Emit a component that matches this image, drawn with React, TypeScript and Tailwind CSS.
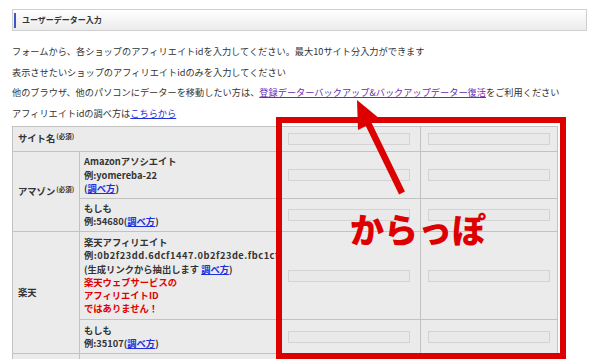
const Req = () => (
  <span className="relative top-[-3px] ml-[1px] text-[6.5px] font-bold">(必須)</span>
);

const Howto = () => (
  <a href="#" className="text-[#1f2fe0] underline">
    調べ方
  </a>
);

const Field = () => (
  <input
    type="text"
    readOnly
    className="mx-auto block h-[12px] w-[122px] border border-[#d3d3d3] bg-[#e9e9e9] outline-none"
  />
);

const InputCells = () => (
  <>
    <td className="border border-[#c2c2c2] align-middle">
      <Field />
    </td>
    <td className="border border-[#c2c2c2] align-middle">
      <Field />
    </td>
  </>
);

export default function App() {
  return (
    <div className="relative h-[359px] w-[600px] overflow-hidden bg-white font-['Noto_Sans_CJK_JP',sans-serif] text-[#333]">
      <div className="w-[587px] pl-[12px] pt-[9px]">
        {/* Section header */}
        <div className="flex h-[22px] items-center border border-[#cfcfcf] bg-gradient-to-b from-white to-[#ebebeb] pl-[1px]">
          <span className="h-[15px] w-[2px] bg-[#3f57c4]" />
          <span className="ml-[6px] text-[8px] font-bold">ユーザーデーター入力</span>
        </div>

        {/* Intro */}
        <div className="mt-[10px] mb-[3px] text-[9.2px] leading-[20.6px]">
          <p>フォームから、各ショップのアフィリエイトidを入力してください。最大10サイト分入力ができます</p>
          <p>表示させたいショップのアフィリエイトidのみを入力してください</p>
          <p>
            他のブラウザ、他のパソコンにデーターを移動したい方は、
            <a href="#" className="text-[#6a2bb0] underline">
              登録データーバックアップ&amp;バックアップデーター復活
            </a>
            をご利用ください
          </p>
          <p>
            アフィリエイトidの調べ方は
            <a href="#" className="text-[#1f2fe0] underline">
              こちらから
            </a>
          </p>
        </div>

        {/* Form table */}
        <table className="w-[545px] table-fixed border-collapse bg-[#ebebeb] text-[9.3px] font-bold leading-[13.3px]">
          <colgroup>
            <col className="w-[67px]" />
            <col className="w-[197px]" />
            <col className="w-[144px]" />
            <col className="w-[137px]" />
          </colgroup>
          <tbody>
            <tr className="h-[25px]">
              <td colSpan={2} className="border border-[#c2c2c2] pl-[5px] align-middle">
                サイト名
                <Req />
              </td>
              <InputCells />
            </tr>
            <tr className="h-[47px]">
              <td rowSpan={2} className="border border-[#c2c2c2] pl-[5px] align-middle">
                アマゾン
                <Req />
              </td>
              <td className="border border-[#c2c2c2] px-[4px] align-middle">
                <div>Amazonアソシエイト</div>
                <div>例:yomereba-22</div>
                <div>
                  (<Howto />)
                </div>
              </td>
              <InputCells />
            </tr>
            <tr className="h-[33px]">
              <td className="border border-[#c2c2c2] px-[4px] align-middle">
                <div>もしも</div>
                <div>
                  例:54680(<Howto />)
                </div>
              </td>
              <InputCells />
            </tr>
            <tr className="h-[88px]">
              <td rowSpan={2} className="border border-[#c2c2c2] pl-[5px] align-middle">
                楽天
              </td>
              <td className="border border-[#c2c2c2] pl-[4px] align-middle">
                <div className="overflow-hidden whitespace-nowrap">
                  <div>楽天アフィリエイト</div>
                  <div className="tracking-[0.5px]">例:0b2f23dd.6dcf1447.0b2f23de.fbc1cf1c</div>
                  <div>
                    (生成リンクから抽出します <Howto />)
                  </div>
                  <div className="text-[#e00000]">楽天ウェブサービスの</div>
                  <div className="text-[#e00000]">アフィリエイトID</div>
                  <div className="text-[#e00000]">ではありません！</div>
                </div>
              </td>
              <InputCells />
            </tr>
            <tr className="h-[34px]">
              <td className="border border-[#c2c2c2] px-[4px] align-middle">
                <div>もしも</div>
                <div>
                  例:35107(<Howto />)
                </div>
              </td>
              <InputCells />
            </tr>
            <tr className="h-[40px]">
              <td className="border border-[#c2c2c2]" />
              <td className="border border-[#c2c2c2]" />
              <InputCells />
            </tr>
          </tbody>
        </table>
      </div>

      {/* Annotation: red frame, arrow, label */}
      <div className="pointer-events-none absolute left-[276px] top-[117px] h-[242px] w-[290px] border-[6px] border-[#dd0000]" />
      <svg
        className="pointer-events-none absolute left-0 top-0"
        width="600"
        height="359"
        viewBox="0 0 600 359"
      >
        <line x1="402" y1="193" x2="367" y2="121" stroke="#dd0000" strokeWidth="6.5" />
        <polygon points="357,100 380,119 358,130" fill="#dd0000" />
      </svg>
      <div className="pointer-events-none absolute left-[350px] top-[212px] text-[34px] font-black leading-none text-[#dd0000]">
        からっぽ
      </div>
    </div>
  );
}
